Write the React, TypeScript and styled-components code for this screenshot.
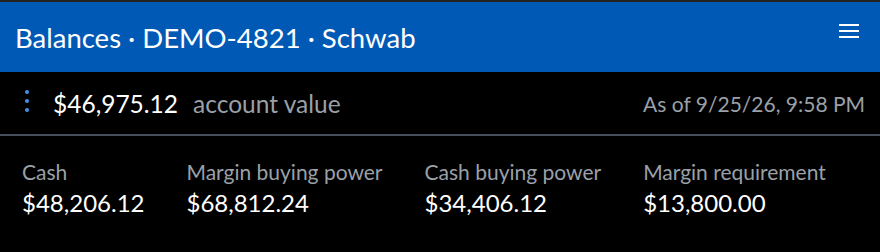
import React from "react";
import styled, { createGlobalStyle } from "styled-components";

const GlobalStyle = createGlobalStyle`
  html, body {
    margin: 0;
    padding: 0;
    background: #000;
  }
  body {
    font-family: Lato, "Noto Sans", sans-serif;
  }
`;

const Panel = styled.div`
  width: 880px;
  height: 252px;
  background: #000;
  border-top: 2px solid #222;
  box-sizing: border-box;
  display: flex;
  flex-direction: column;
`;

const Header = styled.div`
  height: 70px;
  flex-shrink: 0;
  background: #005ab5;
  display: flex;
  align-items: center;
  justify-content: space-between;
  padding: 0 21px 0 15px;
`;

const Title = styled.h1`
  margin: 0;
  font-size: 27.5px;
  font-weight: 400;
  color: #fff;
`;

const MenuButton = styled.button`
  background: none;
  border: none;
  padding: 0;
  width: 20px;
  height: 14px;
  display: flex;
  flex-direction: column;
  justify-content: space-between;
  cursor: pointer;
  margin-top: -12px;
`;

const MenuLine = styled.span`
  display: block;
  height: 2px;
  background: #fff;
`;

const Summary = styled.div`
  height: 62px;
  flex-shrink: 0;
  display: flex;
  align-items: center;
  padding: 0 15px 0 25px;
  border-bottom: 2px solid #464e5c;
`;

const Dots = styled.div`
  display: flex;
  flex-direction: column;
  gap: 5px;
  margin-right: 24px;
  margin-top: -4px;
`;

const Dot = styled.span`
  width: 4px;
  height: 4px;
  border-radius: 50%;
  background: #4a8fe6;
`;

const Total = styled.span`
  font-size: 24.5px;
  color: #fff;
  margin-right: 15px;
`;

const TotalLabel = styled.span`
  font-size: 24.5px;
  color: #9aa0a8;
  flex: 1;
`;

const AsOf = styled.span`
  font-size: 21px;
  color: #9aa0a8;
`;

const Metrics = styled.div`
  display: flex;
  gap: 42px;
  padding: 23px 22px 0;
`;

const Metric = styled.div`
  display: flex;
  flex-direction: column;
`;

const MetricLabel = styled.span`
  font-size: 21px;
  color: #9aa0a8;
  line-height: 25px;
`;

const MetricValue = styled.span`
  font-size: 24px;
  color: #fff;
  line-height: 29px;
  margin-top: 4px;
`;

const metrics = [
  { label: "Cash", value: "$48,206.12" },
  { label: "Margin buying power", value: "$68,812.24" },
  { label: "Cash buying power", value: "$34,406.12" },
  { label: "Margin requirement", value: "$13,800.00" },
];

export default function App() {
  return (
    <>
      <GlobalStyle />
      <Panel>
        <Header>
          <Title>Balances · DEMO-4821 · Schwab</Title>
          <MenuButton aria-label="Menu">
            <MenuLine />
            <MenuLine />
            <MenuLine />
          </MenuButton>
        </Header>
        <Summary>
          <Dots>
            <Dot />
            <Dot />
            <Dot />
          </Dots>
          <Total>$46,975.12</Total>
          <TotalLabel>account value</TotalLabel>
          <AsOf>As of 9/25/26, 9:58{"\u202F"}PM</AsOf>
        </Summary>
        <Metrics>
          {metrics.map((m) => (
            <Metric key={m.label}>
              <MetricLabel>{m.label}</MetricLabel>
              <MetricValue>{m.value}</MetricValue>
            </Metric>
          ))}
        </Metrics>
      </Panel>
    </>
  );
}
